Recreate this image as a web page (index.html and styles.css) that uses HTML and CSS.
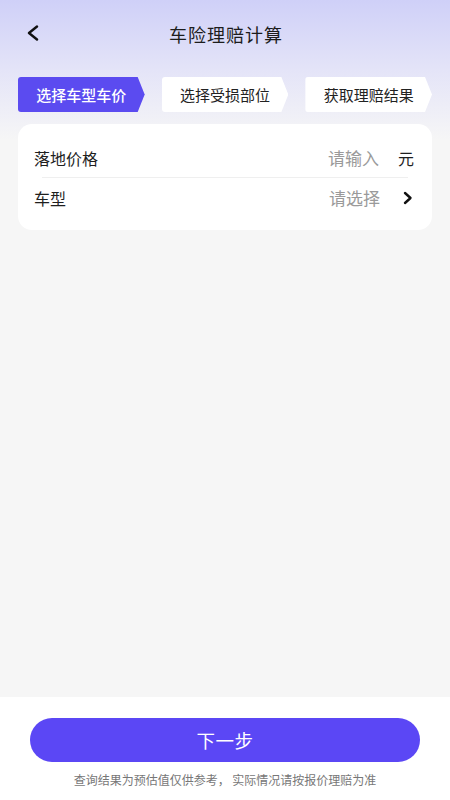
FILE: index.html
```html
<!DOCTYPE html>
<html lang="zh-CN">
<head>
<meta charset="utf-8">
<title>车险理赔计算</title>
<link rel="stylesheet" href="styles.css">
</head>
<body>
<div class="page">
  <header class="header">
    <span class="back">
      <svg width="14" height="16" viewBox="0 0 14 16"><path d="M11 1.5 L3 8 L11 14.5" fill="none" stroke="#111" stroke-width="2.4" stroke-linecap="round" stroke-linejoin="round"/></svg>
    </span>
    <h1 class="title">车险理赔计算</h1>
  </header>

  <nav class="steps">
    <div class="step active">选择车型车价</div>
    <div class="step">选择受损部位</div>
    <div class="step">获取理赔结果</div>
  </nav>

  <section class="card">
    <div class="row">
      <span class="label">落地价格</span>
      <span class="value">
        <span class="placeholder">请输入</span>
        <span class="unit">元</span>
      </span>
    </div>
    <div class="divider"></div>
    <div class="row">
      <span class="label">车型</span>
      <span class="value">
        <span class="placeholder">请选择</span>
        <svg class="chev" width="11" height="14" viewBox="0 0 11 14"><path d="M3 2 L8.5 7 L3 12" fill="none" stroke="#111" stroke-width="2.4" stroke-linecap="round" stroke-linejoin="round"/></svg>
      </span>
    </div>
  </section>

  <div class="spacer"></div>

  <footer class="bottom">
    <button class="next">下一步</button>
    <p class="note">查询结果为预估值仅供参考， 实际情况请按报价理赔为准</p>
  </footer>
</div>
</body>
</html>
```

FILE: styles.css
```css
* { box-sizing: border-box; }
html, body { margin: 0; padding: 0; }
body {
  font-family: "Noto Sans CJK SC", "Noto Sans", sans-serif;
  color: #1f1f1f;
  background: #f6f6f6;
}
.page {
  width: 450px;
  height: 800px;
  display: flex;
  flex-direction: column;
  background: linear-gradient(180deg, #cfd0f8 0px, #e4e4f8 70px, #f6f6f6 140px, #f6f6f6 100%);
}
.header {
  position: relative;
  height: 68px;
  display: flex;
  align-items: center;
  justify-content: center;
}
.back {
  position: absolute;
  left: 26px;
  top: 25px;
  display: flex;
}
.title {
  margin: 0;
  font-size: 18px;
  font-weight: 400;
  color: #1c1c1c;
  letter-spacing: 1px;
  padding-left: 2px;
}
.steps {
  display: flex;
  gap: 17px;
  padding: 0 18px;
  margin-top: 9px;
}
.step {
  flex: 1;
  height: 35px;
  display: flex;
  align-items: center;
  justify-content: center;
  font-size: 15px;
  color: #222;
  background: #fff;
  border-radius: 3px 0 0 3px;
  clip-path: polygon(0 0, calc(100% - 7px) 0, 100% 50%, calc(100% - 7px) 100%, 0 100%);
}
.step.active {
  background: #5b4bf0;
  color: #fff;
  font-weight: 500;
}
.card {
  margin: 12px 18px 0;
  background: #fff;
  border-radius: 14px;
  padding: 14px 0 13px;
}
.row {
  height: 39px;
  display: flex;
  align-items: center;
  justify-content: space-between;
  padding: 0 18px 0 16px;
}
.label {
  font-size: 16px;
  color: #1f1f1f;
}
.value {
  display: flex;
  align-items: center;
}
.placeholder {
  font-size: 17px;
  color: #9a9a9a;
}
.unit {
  margin-left: 19px;
  font-size: 16px;
  color: #1f1f1f;
}
.chev {
  margin-left: 22px;
  margin-right: 1px;
}
.divider {
  height: 1px;
  background: #efefef;
  margin: 0 24px;
}
.spacer { flex: 1; }
.bottom {
  height: 103px;
  background: #fff;
  display: flex;
  flex-direction: column;
  align-items: center;
  padding-top: 21px;
}
.next {
  width: 390px;
  height: 44px;
  border: none;
  border-radius: 22px;
  background: #5b47f5;
  color: #fff;
  font-family: inherit;
  font-size: 18.5px;
  letter-spacing: 0.5px;
}
.note {
  margin: 10px 0 0;
  font-size: 12px;
  color: #777;
  line-height: 16px;
}
```
